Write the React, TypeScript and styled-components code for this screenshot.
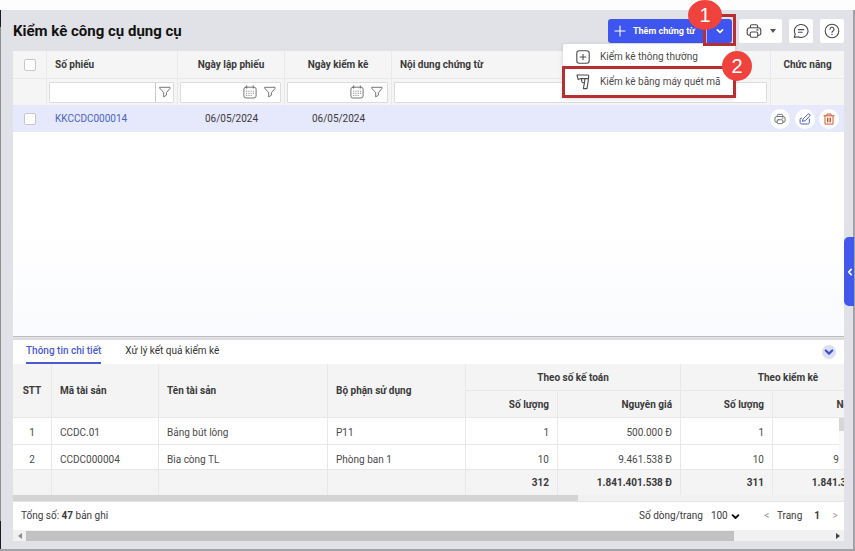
import React from "react";
import styled, { createGlobalStyle, css } from "styled-components";

const GlobalStyle = createGlobalStyle`
  * { box-sizing: border-box; }
  body {
    margin: 0;
    background: #fdfdfd;
    color: #3a3a3a;
    font-family: Roboto, "Liberation Sans", sans-serif;
    font-size: 10px;
    line-height: 14px;
  }
  button, input, select { font: inherit; color: inherit; }
  button { cursor: pointer; }
`;

/* ---------- icons ---------- */

const Icon = styled.svg<{ $size?: number }>`
  display: block;
  flex: none;
  width: ${(p) => p.$size ?? 16}px;
  height: ${(p) => p.$size ?? 16}px;
  fill: none;
  stroke: currentColor;
  stroke-width: 1.1;
  stroke-linecap: round;
  stroke-linejoin: round;
`;

type IconProps = { size?: number };

const PlusIcon = ({ size = 12 }: IconProps) => (
  <Icon $size={size} viewBox="0 0 12 12" aria-hidden>
    <path d="M6 1v10M1 6h10" />
  </Icon>
);

const ChevronIcon = ({ size = 8 }: IconProps) => (
  <Icon $size={size} viewBox="0 0 8 8" aria-hidden>
    <path d="M1.4 2.8 4 5.3l2.6-2.5" strokeWidth="1.7" />
  </Icon>
);

const PrinterIcon = ({ size = 16 }: IconProps) => (
  <Icon $size={size} viewBox="0 0 16 16" aria-hidden>
    <path d="M4.4 4.6V3.2A1.4 1.4 0 0 1 5.8 1.8h4.4a1.4 1.4 0 0 1 1.4 1.4v1.4" />
    <path d="M4 12.2H3.2A1.9 1.9 0 0 1 1.2 10.4V7.2A2.6 2.6 0 0 1 3.8 4.7h8.4a2.6 2.6 0 0 1 2.6 2.5v3.2a1.9 1.9 0 0 1-2 1.8H12" />
    <rect x="4.2" y="9" width="7.6" height="5.2" rx="1.4" />
    <path d="M10.8 6.9h1.2" />
  </Icon>
);

const ChatIcon = () => (
  <Icon $size={16} viewBox="0 0 16 16" aria-hidden>
    <path d="M1.3 14.4 2.2 11A6.8 6.5 0 1 1 5 13.7Z" />
    <path d="M5.4 6.6h5.4M5.4 9.2h3.8" />
  </Icon>
);

const HelpIcon = () => (
  <Icon $size={16} viewBox="0 0 16 16" aria-hidden>
    <circle cx="8" cy="8" r="6.8" />
    <path d="M6 6.3a2 2 0 1 1 3 1.7c-.7.4-1 .7-1 1.4" />
    <path d="M8 11.4v.2" strokeWidth="1.4" />
  </Icon>
);

const FunnelIcon = () => (
  <Icon $size={12} viewBox="0 0 12 12" aria-hidden>
    <path d="M1 1.3h10v1.2L7.4 6.6v2.6L4.7 10.9V6.6L1 2.5Z" strokeWidth="0.9" />
  </Icon>
);

const CalendarIcon = () => (
  <Icon $size={14} viewBox="0 0 14 14" aria-hidden>
    <rect x="0.9" y="2.2" width="12.2" height="10.8" rx="2" strokeWidth="0.9" />
    <path d="M3.7 0.8v2.4M10.3 0.8v2.4" strokeWidth="0.9" />
    <path
      d="M3.7 6.2h.1M5.9 6.2h.1M8.1 6.2h.1M10.3 6.2h.1M3.7 8.3h.1M5.9 8.3h.1M8.1 8.3h.1M10.3 8.3h.1M3.7 10.4h.1M5.9 10.4h.1M8.1 10.4h.1"
      strokeWidth="1"
    />
  </Icon>
);

const PlusBoxIcon = () => (
  <Icon $size={14} viewBox="0 0 14 14" aria-hidden>
    <rect x="0.8" y="0.8" width="12.4" height="12.4" rx="2.4" />
    <path d="M7 4.2v5.6M4.2 7h5.6" />
  </Icon>
);

const ScannerIcon = () => (
  <Icon $size={16} viewBox="0 0 16 16" aria-hidden>
    <path d="M2 1H12.6C13.6 1 13.9 1.6 13.7 2.4L13.3 4.6H5.8L3.2 5.6Z" />
    <path d="M13.3 4.6C13.6 8 12.4 10.600 12 14.600H8.400C8.800 10.600 10.200 8 9.800 4.600" />
    <path d="M9.500 8.800H7.800C6.700 8.800 6.700 7.200 6.500 4.800" />
  </Icon>
);

const EditIcon = () => (
  <Icon $size={12} viewBox="0 0 12 12" aria-hidden>
    <path d="M4.200 5.900 8.800 1.300a1.200 1.200 0 0 1 1.900 1.800L6.200 7.700 3.800 8.200Z" strokeWidth="1" />
    <path d="M10.300 6v3.500c0 1-.5 1.500-1.500 1.500H2.600c-1 0-1.500-.5-1.500-1.500V6.700c0-1 .5-1.500 1.500-1.500" strokeWidth="1" />
  </Icon>
);

const TrashIcon = () => (
  <Icon $size={12} viewBox="0 0 12 12" aria-hidden>
    <path
      d="M.9 2.8h10.2M4 2.7V1h4v1.7M2 2.9v8.200h8V2.900M4.500 5v4M6 5v4M7.500 5v4"
      strokeWidth="1"
    />
  </Icon>
);

const Caret = styled.span<{ $dir: "down" | "left" | "right" }>`
  width: 0;
  height: 0;
  border: 3px solid transparent;
  ${(p) => p.$dir === "down" && css`border-top: 4px solid #555; border-bottom: 0;`}
  ${(p) => p.$dir === "left" && css`border-right: 4px solid #8a8a8a; border-left: 0;`}
  ${(p) => p.$dir === "right" && css`border-left: 4px solid #444; border-right: 0;`}
`;

/* ---------- page frame ---------- */

const Page = styled.div`
  display: flex;
  flex-direction: column;
  height: 100vh;
  min-height: 480px;
  padding-top: 10px;
`;

const Frame = styled.main`
  position: relative;
  flex: 1;
  display: flex;
  flex-direction: column;
  min-height: 0;
  padding: 1px 9px 8px 13px;
  background:
    linear-gradient(#1c1c24 17px, #8e8e92 17px calc(100% - 28px), #1c1c24 calc(100% - 28px)) left / 1px 100% no-repeat,
    #e1e2e7;
  border: 0 solid #a3a3a7;
  border-width: 0 2px 2px 0;
`;

const Header = styled.header`
  display: flex;
  align-items: center;
  justify-content: space-between;
  flex: none;
  height: 40px;
`;

const Title = styled.h1`
  margin: 0;
  font-size: 15px;
  line-height: 20px;
  font-weight: 700;
  color: #111;
`;

const Actions = styled.div`
  display: flex;
  gap: 7px;
`;

const ToolButton = styled.button<{ $wide?: boolean }>`
  display: flex;
  align-items: center;
  justify-content: center;
  gap: 8px;
  width: ${(p) => (p.$wide ? 43 : 24)}px;
  height: 24px;
  padding: 0;
  border: 0;
  border-radius: 2px;
  background: #fff;
  color: #4a4a4a;
`;

const SplitButton = styled.div`
  position: relative;
  display: flex;
  height: 24px;
  border-radius: 3px;
  background: #3f55ef;
  color: #fff;
`;

const AddButton = styled.button`
  display: flex;
  align-items: center;
  gap: 7px;
  width: 99px;
  padding: 0 0 0 6px;
  border: 0;
  border-right: 1px solid #a9b3f8;
  background: none;
  font-size: 9px;
  font-weight: 700;
  white-space: nowrap;
`;

const ToggleButton = styled.button`
  display: flex;
  align-items: center;
  justify-content: center;
  width: 25px;
  padding: 0;
  border: 0;
  background: none;
`;

const Menu = styled.div`
  position: absolute;
  z-index: 2;
  top: 25px;
  right: -3px;
  width: 172px;
  padding-bottom: 4px;
  background: #fff;
  border-radius: 2px;
  box-shadow: 0 1px 4px rgba(0, 0, 0, 0.16);
`;

const MenuItem = styled.button`
  display: grid;
  grid-template-columns: 16px 1fr;
  align-items: center;
  justify-items: center;
  gap: 9px;
  width: 100%;
  height: 25px;
  padding: 0 0 0 12px;
  border: 0;
  background: none;
  color: #4c4c4c;
  text-align: left;
  white-space: nowrap;
  span { justify-self: start; }
`;

const Outline = styled.span<{ $target: "toggle" | "item" }>`
  position: absolute;
  z-index: 3;
  pointer-events: none;
  border: 3px solid #b52f33;
  ${(p) =>
    p.$target === "toggle"
      ? css`top: -5px; right: -4px; width: 33px; height: 32px;`
      : css`top: 22px; left: -1px; right: -1px; height: 32px;`}
`;

const Marker = styled.span<{ $step: 1 | 2 }>`
  position: absolute;
  z-index: 4;
  display: flex;
  align-items: center;
  justify-content: center;
  border-radius: 50%;
  background: #f0433d;
  color: #fff;
  font-family: "Liberation Sans", Arial, sans-serif;
  font-size: 20px;
  line-height: 20px;
  ${(p) =>
    p.$step === 1
      ? css`top: -19px; right: 10px; width: 34px; height: 30px;`
      : css`top: 32px; right: -20px; width: 30px; height: 30px;`}
`;

/* ---------- voucher list ---------- */

const ListPanel = styled.section`
  flex: 1;
  min-height: 0;
  background: linear-gradient(#fff 60%, #fafbfe);
  border-bottom: 1px solid #bdbdbd;
`;

const ListTable = styled.table`
  width: 100%;
  table-layout: fixed;
  border-collapse: separate;
  border-spacing: 0;
`;

const HeadCell = styled.th<{ $align?: "left" | "center" }>`
  height: 28px;
  padding: 1px 8px 0;
  background: #f5f5f5;
  border-right: 1px solid #e9e9e9;
  border-bottom: 1px solid #e9e9e9;
  font-weight: 700;
  text-align: ${(p) => p.$align ?? "left"};
  white-space: nowrap;
  &:last-child { border-right: 0; }
`;

const FilterCell = styled.td`
  height: 26px;
  padding: 0 3px 0 2px;
  background: #f5f5f5;
  border-right: 1px solid #e9e9e9;
  &:last-child { border-right: 0; }
`;

const FilterBox = styled.div`
  display: flex;
  align-items: center;
  height: 21px;
  background: #fff;
  border: 1px solid #dcdcdc;
  border-radius: 1px;
`;

const FilterInput = styled.input`
  flex: 1;
  min-width: 0;
  height: 100%;
  padding: 0 4px;
  border: 0;
  outline: 0;
  background: transparent;
`;

const FilterButton = styled.button<{ $divided?: boolean }>`
  display: flex;
  align-items: center;
  justify-content: center;
  width: ${(p) => (p.$divided ? 18 : 20)}px;
  height: 100%;
  padding: 0;
  border: 0;
  border-left: ${(p) => (p.$divided ? "1px solid #c9c9c9" : "0")};
  background: none;
  color: #666;
`;

const ListCell = styled.td<{ $align?: "left" | "center" }>`
  height: 27px;
  padding: 1px 8px 0;
  background: #e6e8fb;
  text-align: ${(p) => p.$align ?? "left"};
  white-space: nowrap;
`;

const CheckBox = styled.input`
  appearance: none;
  display: block;
  width: 12px;
  height: 12px;
  margin: 0 auto;
  border: 1px solid #c8c8cc;
  border-radius: 2px;
  background: #fff;
`;

const CodeLink = styled.a`
  color: #4767bd;
  text-decoration: none;
`;

const RowActions = styled.div`
  display: flex;
  justify-content: space-between;
  margin: 0 -3px 0 -9px;
`;

const RoundButton = styled.button<{ $tone: string }>`
  display: flex;
  align-items: center;
  justify-content: center;
  flex: none;
  width: 20px;
  height: 20px;
  padding: 0;
  border: 0;
  border-radius: 50%;
  background: #fff;
  color: ${(p) => p.$tone};
`;

/* ---------- detail panel ---------- */

const DetailPanel = styled.section`
  flex: none;
  border-top: 2px solid #dcdcdf;
  margin-top: 1px;
  background: #fff;
`;

const TabBar = styled.div`
  display: flex;
  align-items: center;
  justify-content: space-between;
  height: 24px;
  padding: 0 8px 0 13px;
`;

const Tabs = styled.div`
  display: flex;
  gap: 24px;
  height: 24px;
`;

const Tab = styled.button<{ $active?: boolean }>`
  padding: 0;
  border: 0;
  border-bottom: 2px solid ${(p) => (p.$active ? "#4a5bd4" : "transparent")};
  background: none;
  color: ${(p) => (p.$active ? "#4a5bd4" : "#333")};
  font-weight: ${(p) => (p.$active ? 500 : 400)};
`;

const CollapseButton = styled.button`
  display: flex;
  align-items: center;
  justify-content: center;
  width: 14px;
  height: 14px;
  padding: 0;
  border: 0;
  border-radius: 50%;
  background: #dcdff0;
  color: #3d4fd8;
`;

const Clip = styled.div`
  overflow: hidden;
`;

const BodyArea = styled.div`
  display: flex;
  height: 51px;
  > div:first-child { flex: 1; }
`;

const DetailTable = styled.table`
  width: 883px;
  min-width: 100%;
  table-layout: fixed;
  border-collapse: separate;
  border-spacing: 0;
`;

type CellAlign = "left" | "center" | "right";

const detailCell = css<{ $align?: CellAlign }>`
  height: 27px;
  padding: 1px 8px 0;
  border-right: 1px solid #e8e8e8;
  border-bottom: 1px solid #e8e8e8;
  text-align: ${(p) => p.$align ?? "left"};
  white-space: nowrap;
`;

const DetailHead = styled.th<{ $align?: CellAlign }>`
  ${detailCell}
  background: #f4f4f4;
  font-weight: 700;
`;

const DetailCell = styled.td<{ $align?: CellAlign }>`
  ${detailCell}
  padding-top: 3px;
  color: #4a4a4a;
`;

const TotalCell = styled.td<{ $align?: CellAlign }>`
  ${detailCell}
  height: 26px;
  border-top: 1px solid #e8e8e8;
  border-bottom: 0;
  background: #f4f4f4;
  font-weight: 700;
`;

const VerticalTrack = styled.div`
  flex: none;
  width: 5px;
  background: #f8f8f8;
`;

const VerticalThumb = styled.div`
  height: 13px;
  background: #d6d6d6;
`;

const InnerTrack = styled.div`
  height: 6px;
  background: #f1f1f1;
`;

const InnerThumb = styled.div`
  width: 68%;
  height: 100%;
  background: #d4d4d4;
`;

const Footer = styled.footer`
  display: flex;
  align-items: center;
  justify-content: space-between;
  height: 29px;
  padding: 0 6px 0 8px;
  border-top: 1px solid #e4e4e4;
`;

const Pager = styled.div`
  display: flex;
  align-items: center;
  gap: 8px;
`;

const SelectWrap = styled.span`
  display: grid;
  grid-template-columns: 20px 9px;
  align-items: center;
`;

const PageSize = styled.select`
  grid-area: 1 / 1 / 2 / 3;
  appearance: none;
  padding: 0;
  border: 0;
  outline: 0;
  background: none;
`;

const SelectChevron = styled.span`
  grid-area: 1 / 2;
  color: #111;
  pointer-events: none;
`;

const PageStep = styled.button`
  width: 6px;
  padding: 0;
  border: 0;
  background: none;
  color: #999;
`;

const PageLinks = styled.div`
  display: flex;
  gap: 12px;
  margin-left: 16px;
`;

const PagePair = styled.span`
  display: flex;
  gap: 7px;
`;

const OuterTrack = styled.div`
  display: grid;
  grid-template-columns: 13px 1fr 13px;
  align-items: center;
  justify-items: center;
  height: 11px;
  background: #f1f1f1;
`;

const OuterThumb = styled.div`
  justify-self: start;
  width: 88%;
  height: 10px;
  background: #c1c1c1;
`;

const SideHandle = styled.button`
  position: absolute;
  top: 227px;
  right: -1px;
  display: flex;
  align-items: center;
  justify-content: flex-end;
  width: 10px;
  height: 69px;
  padding: 0;
  border: 0;
  border-radius: 5px 0 0 5px;
  background: #4257ec;
  color: #fff;
  svg { transform: rotate(90deg); }
`;

/* ---------- data ---------- */

const detailRows = [
  ["1", "CCDC.01", "Bảng bút lông", "P11", "1", "500.000 Đ", "1", "500.000 Đ"],
  ["2", "CCDC000004", "Bìa còng TL", "Phòng ban 1", "10", "9.461.538 Đ", "10", "9.461.538 Đ"],
];
const totals = ["", "", "", "", "312", "1.841.401.538 Đ", "311", "1.841.301.538 Đ"];
const aligns: CellAlign[] = ["center", "left", "left", "left", "right", "right", "right", "right"];

const DetailCols = () => (
  <colgroup>
    {[39, 107, 169, 138, 92, 123, 92, 123].map((w, i) => (
      <col key={i} width={w} />
    ))}
  </colgroup>
);

const DateFilter = ({ label }: { label: string }) => (
  <FilterBox>
    <FilterInput aria-label={label} />
    <FilterButton aria-label={`Chọn ngày: ${label}`}><CalendarIcon /></FilterButton>
    <FilterButton aria-label={`Lọc ${label}`}><FunnelIcon /></FilterButton>
  </FilterBox>
);

export default function App() {
  return (
    <>
      <GlobalStyle />
      <Page>
        <Frame>
          <Header>
            <Title>Kiểm kê công cụ dụng cụ</Title>
            <Actions>
              <SplitButton>
                <AddButton><PlusIcon />Thêm chứng từ</AddButton>
                <ToggleButton aria-label="Mở danh sách" aria-expanded="true"><ChevronIcon /></ToggleButton>
                <Menu>
                  <MenuItem><PlusBoxIcon /><span>Kiểm kê thông thường</span></MenuItem>
                  <MenuItem><ScannerIcon /><span>Kiểm kê bằng máy quét mã</span></MenuItem>
                  <Outline $target="item" />
                </Menu>
                <Outline $target="toggle" />
                <Marker $step={1}>1</Marker>
                <Marker $step={2}>2</Marker>
              </SplitButton>
              <ToolButton $wide aria-label="In"><PrinterIcon /><Caret $dir="down" /></ToolButton>
              <ToolButton aria-label="Phản hồi"><ChatIcon /></ToolButton>
              <ToolButton aria-label="Trợ giúp"><HelpIcon /></ToolButton>
            </Actions>
          </Header>

          <ListPanel>
            <ListTable>
              <colgroup>
                <col width={34} /><col width={131} /><col width={107} /><col width={107} /><col /><col width={73} />
              </colgroup>
              <thead>
                <tr>
                  <HeadCell><CheckBox type="checkbox" aria-label="Chọn tất cả" /></HeadCell>
                  <HeadCell>Số phiếu</HeadCell>
                  <HeadCell $align="center">Ngày lập phiếu</HeadCell>
                  <HeadCell $align="center">Ngày kiểm kê</HeadCell>
                  <HeadCell>Nội dung chứng từ</HeadCell>
                  <HeadCell $align="center">Chức năng</HeadCell>
                </tr>
                <tr>
                  <FilterCell />
                  <FilterCell>
                    <FilterBox>
                      <FilterInput aria-label="Số phiếu" />
                      <FilterButton $divided aria-label="Lọc Số phiếu"><FunnelIcon /></FilterButton>
                    </FilterBox>
                  </FilterCell>
                  <FilterCell><DateFilter label="Ngày lập phiếu" /></FilterCell>
                  <FilterCell><DateFilter label="Ngày kiểm kê" /></FilterCell>
                  <FilterCell><FilterBox><FilterInput aria-label="Nội dung chứng từ" /></FilterBox></FilterCell>
                  <FilterCell />
                </tr>
              </thead>
              <tbody>
                <tr>
                  <ListCell><CheckBox type="checkbox" aria-label="Chọn KKCCDC000014" /></ListCell>
                  <ListCell><CodeLink href="#KKCCDC000014">KKCCDC000014</CodeLink></ListCell>
                  <ListCell $align="center">06/05/2024</ListCell>
                  <ListCell $align="center">06/05/2024</ListCell>
                  <ListCell />
                  <ListCell>
                    <RowActions>
                      <RoundButton $tone="#555" aria-label="In"><PrinterIcon size={12} /></RoundButton>
                      <RoundButton $tone="#4a5fc4" aria-label="Sửa"><EditIcon /></RoundButton>
                      <RoundButton $tone="#cf5a2e" aria-label="Xóa"><TrashIcon /></RoundButton>
                    </RowActions>
                  </ListCell>
                </tr>
              </tbody>
            </ListTable>
          </ListPanel>

          <DetailPanel>
            <TabBar>
              <Tabs role="tablist">
                <Tab role="tab" aria-selected="true" $active>Thông tin chi tiết</Tab>
                <Tab role="tab" aria-selected="false">Xử lý kết quả kiểm kê</Tab>
              </Tabs>
              <CollapseButton aria-label="Thu gọn"><ChevronIcon size={10} /></CollapseButton>
            </TabBar>
            <Clip>
              <DetailTable>
                <DetailCols />
                <thead>
                  <tr>
                    <DetailHead rowSpan={2} $align="center">STT</DetailHead>
                    <DetailHead rowSpan={2}>Mã tài sản</DetailHead>
                    <DetailHead rowSpan={2}>Tên tài sản</DetailHead>
                    <DetailHead rowSpan={2}>Bộ phận sử dụng</DetailHead>
                    <DetailHead colSpan={2} $align="center">Theo số kế toán</DetailHead>
                    <DetailHead colSpan={2} $align="center">Theo kiểm kê</DetailHead>
                  </tr>
                  <tr>
                    <DetailHead $align="right">Số lượng</DetailHead>
                    <DetailHead $align="right">Nguyên giá</DetailHead>
                    <DetailHead $align="right">Số lượng</DetailHead>
                    <DetailHead $align="right">Nguyên giá</DetailHead>
                  </tr>
                </thead>
              </DetailTable>
            </Clip>
            <BodyArea>
              <Clip>
                <DetailTable>
                  <DetailCols />
                  <tbody>
                    {detailRows.map((row) => (
                      <tr key={row[0]}>
                        {row.map((v, i) => <DetailCell key={i} $align={aligns[i]}>{v}</DetailCell>)}
                      </tr>
                    ))}
                  </tbody>
                </DetailTable>
              </Clip>
              <VerticalTrack><VerticalThumb /></VerticalTrack>
            </BodyArea>
            <Clip>
              <DetailTable>
                <DetailCols />
                <tbody>
                  <tr>{totals.map((v, i) => <TotalCell key={i} $align={aligns[i]}>{v}</TotalCell>)}</tr>
                </tbody>
              </DetailTable>
            </Clip>
            <InnerTrack><InnerThumb /></InnerTrack>
            <Footer>
              <span>Tổng số: <b>47</b> bản ghi</span>
              <Pager>
                <label htmlFor="page-size">Số dòng/trang</label>
                <SelectWrap>
                  <PageSize id="page-size" defaultValue="100">
                    <option>50</option>
                    <option>100</option>
                  </PageSize>
                  <SelectChevron><ChevronIcon size={9} /></SelectChevron>
                </SelectWrap>
                <PageLinks>
                  <PagePair>
                    <PageStep aria-label="Trang trước">&lt;</PageStep>
                    <span>Trang</span>
                  </PagePair>
                  <b>1</b>
                  <PageStep aria-label="Trang sau">&gt;</PageStep>
                </PageLinks>
              </Pager>
            </Footer>
            <OuterTrack>
              <Caret $dir="left" />
              <OuterThumb />
              <Caret $dir="right" />
            </OuterTrack>
          </DetailPanel>

          <SideHandle aria-label="Mở bảng bên"><ChevronIcon /></SideHandle>
        </Frame>
      </Page>
    </>
  );
}
